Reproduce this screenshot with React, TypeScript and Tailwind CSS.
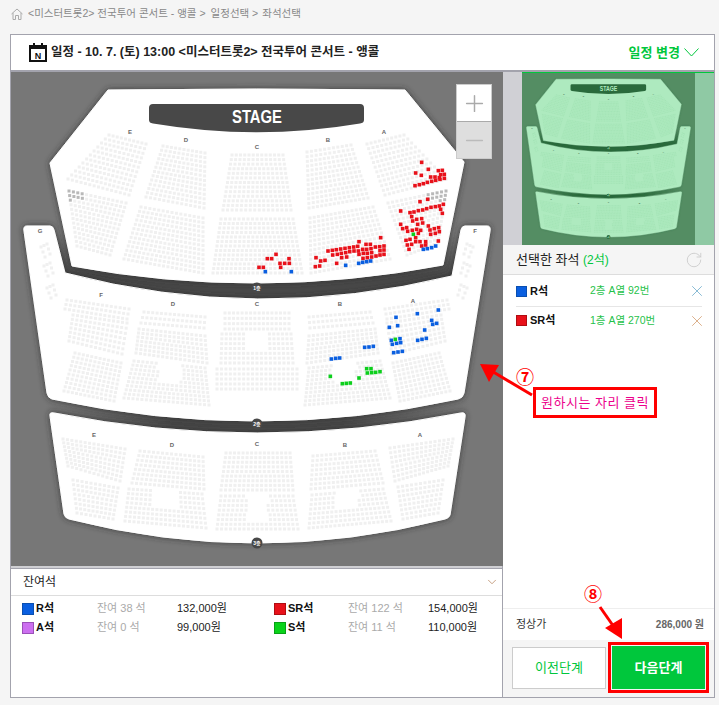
import { Minus, Plus, RotateCw, X, ChevronDown } from "lucide-react";

type Pt = [number, number];
type Block = { c: [Pt, Pt, Pt, Pt]; rows: number; hole?: [number, number, number, number] };

const block = (tl: Pt, tr: Pt, br: Pt, bl: Pt, rows: number, hole?: [number, number, number, number]): Block => ({
  c: [tl, tr, br, bl],
  rows,
  hole,
});

const blocks: Block[] = [
  // 1층
  block([109, 134], [146, 143], [129, 194], [68, 178], 12),
  block([69, 190], [126, 202], [110, 254], [77, 245], 13),
  block([163, 145], [205, 152], [204, 207], [146, 196], 13),
  block([141, 206], [203, 217], [203, 272], [124, 258], 13),
  block([232, 154], [283, 154], [291, 209], [223, 209], 13),
  block([221, 218], [293, 218], [302, 272], [213, 272], 13),
  block([307, 151], [351, 144], [368, 197], [309, 207], 13),
  block([310, 217], [373, 206], [390, 258], [311, 272], 13),
  block([367, 143], [404, 134], [446, 178], [385, 194], 12),
  block([388, 202], [446, 190], [438, 242], [407, 254], 13),
  // 2층
  block([385, 308], [447, 299], [449, 308], [387, 318], 3),
  block([387, 322], [441, 314], [445, 340], [392, 353], 7),
  block([393, 362], [439, 352], [450, 390], [400, 400], 10),
  block([309, 316], [370, 311], [373, 322], [310, 327], 3),
  block([309, 335], [375, 328], [378, 352], [307, 362], 7),
  block([309, 367], [380, 360], [390, 397], [305, 404], 10, [334, 362, 356, 381]),
  block([225, 312], [289, 312], [289, 328], [225, 328], 4),
  block([222, 333], [291, 333], [293, 362], [221, 362], 7, [246, 331, 268, 349]),
  block([217, 368], [297, 368], [297, 388], [217, 388], 5),
  block([129, 308], [67, 299], [65, 308], [127, 318], 3),
  block([127, 322], [73, 314], [69, 340], [122, 353], 7),
  block([121, 362], [75, 352], [64, 390], [114, 400], 10),
  block([205, 316], [144, 311], [141, 322], [204, 327], 3),
  block([205, 335], [139, 328], [136, 352], [207, 362], 7),
  block([205, 367], [134, 360], [124, 397], [209, 404], 10, [158, 362, 180, 381]),
  // 2층 옆
  block([41, 246], [47, 243], [50, 253], [45, 256], 3),
  block([44, 265], [50, 262], [53, 272], [48, 275], 3),
  block([47, 287], [53, 284], [56, 294], [51, 297], 3),
  block([467, 243], [473, 246], [469, 256], [464, 253], 3),
  block([464, 262], [470, 265], [466, 275], [461, 272], 3),
  block([461, 284], [467, 287], [463, 297], [458, 294], 3),
  // 3층
  block([63, 438], [125, 448], [120, 480], [68, 465], 8),
  block([73, 479], [118, 487], [113, 518], [77, 512], 8),
  block([140, 450], [203, 456], [204, 488], [132, 482], 8),
  block([129, 488], [202, 493], [206, 527], [125, 520], 8, [153, 486, 177, 507]),
  block([226, 452], [290, 452], [293, 489], [221, 489], 9),
  block([221, 495], [293, 495], [298, 528], [217, 528], 8, [247, 494, 268, 520]),
  block([313, 455], [375, 450], [383, 482], [311, 488], 8),
  block([312, 494], [383, 488], [391, 520], [309, 527], 8, [337, 486, 359, 507]),
  block([390, 447], [453, 438], [448, 465], [395, 480], 8),
  block([398, 486], [443, 479], [438, 512], [403, 518], 8),
];

const lerp = (a: Pt, b: Pt, t: number): Pt => [a[0] + (b[0] - a[0]) * t, a[1] + (b[1] - a[1]) * t];

const seats: Pt[] = [];
blocks.forEach(({ c, rows, hole }) => {
  for (let r = 0; r < rows; r++) {
    const t = r / (rows - 1);
    const left = lerp(c[0], c[3], t);
    const right = lerp(c[1], c[2], t);
    const n = Math.round(Math.hypot(right[0] - left[0], right[1] - left[1]) / 4.4);
    for (let i = 0; i <= n; i++) {
      const p = lerp(left, right, i / n);
      if (hole && p[0] > hole[0] && p[0] < hole[2] && p[1] > hole[1] && p[1] < hole[3]) continue;
      seats.push(p);
    }
  }
});

// 확대 화면에서 읽은 좌표
const z7 = (l: number[][]): Pt[] => l.map(([x, y]) => [250 + x / 3, 75 + y / 3]);
const z8 = (l: number[][]): Pt[] => l.map(([x, y]) => [250 + x / 3, 280 + y / 3]);

const redSeats = z7([
  [515, 259], [535, 280], [497, 291], [514, 298], [565, 284], [577, 283], [572, 296], [583, 295], [542, 303], [555, 303],
  [568, 305], [583, 307], [557, 313], [570, 310], [545, 316], [532, 319], [520, 323], [508, 326], [495, 329],
  [510, 377], [533, 370], [452, 405], [480, 410], [492, 408], [505, 404], [518, 402], [530, 398], [543, 394], [556, 392],
  [568, 390], [580, 385], [572, 400], [577, 412], [485, 422], [500, 430], [515, 428], [488, 435], [503, 445], [518, 441],
  [452, 445], [458, 458], [470, 455], [535, 450], [540, 462], [553, 458], [566, 455], [473, 466], [487, 463], [500, 460],
  [512, 463], [542, 475], [556, 472], [568, 467], [505, 472], [468, 493], [480, 490], [497, 485], [472, 507], [485, 505],
  [497, 497], [510, 497], [527, 497], [565, 495], [515, 510], [527, 507], [477, 520],
  [392, 485], [327, 497], [348, 505], [361, 505], [234, 525], [247, 523], [259, 521], [272, 519], [285, 517], [298, 515],
  [311, 513], [323, 511], [338, 520], [350, 520], [363, 518], [376, 513], [389, 512], [402, 510], [248, 537], [262, 535],
  [274, 532], [287, 530], [299, 527], [312, 525], [325, 525], [340, 532], [352, 532], [365, 530], [390, 524], [402, 522],
  [198, 545], [275, 545], [290, 543], [327, 535], [339, 547], [352, 545], [365, 543], [378, 540], [390, 537], [402, 535],
  [212, 555], [225, 553], [196, 572], [209, 570], [260, 562],
  [78, 535], [52, 548], [65, 548], [117, 548], [90, 562], [104, 562], [118, 562], [27, 574], [40, 574], [92, 574],
]);

const blueSeats = [
  ...z7([
    [520, 520], [532, 518], [545, 515], [557, 510], [287, 568], [326, 562], [338, 559], [350, 557], [362, 555], [46, 587], [124, 587],
  ]),
  ...z8([
    [438, 109], [502, 98], [565, 87], [545, 118], [548, 130], [560, 127], [418, 139], [443, 134], [524, 147], [424, 178],
    [450, 173], [503, 178], [516, 175], [529, 172], [427, 190], [440, 187], [452, 185], [431, 215], [444, 213], [457, 211],
    [344, 199], [357, 198], [370, 196], [244, 234], [257, 232], [269, 231],
  ]),
];

const greenSeats = [
  ...z7([[490, 475]]),
  ...z8([
    [436, 175], [350, 263], [363, 263], [352, 276], [365, 275], [377, 274], [390, 272], [241, 286], [327, 291], [277, 308], [289, 307], [301, 306],
  ]),
];

const labels: [string, number, number][] = [
  ["E", 130, 133], ["D", 186, 141], ["C", 257, 148], ["B", 328, 141], ["A", 384, 133],
  ["G", 40, 232], ["F", 475, 232], ["F", 101, 296], ["D", 173, 305], ["C", 257, 305], ["B", 340, 305], ["A", 413, 302],
  ["E", 94, 436], ["D", 172, 446], ["C", 257, 445], ["B", 345, 446], ["A", 420, 436],
];

const badges: [string, number][] = [["1층", 287], ["2층", 423], ["3층", 542]];

const floorTop = "M108 89 Q257 87 405 89 L464 161 L443 264 Q257 299.5 72 265 L50 162 Z";
const floorMid =
  "M27 225 L50 225 Q53 225 54 229 L65 272 Q257 322.5 452 275 L461 229 Q462 225 465 225 L487 225 Q491 225 490 230 L464 392 Q463 397 458 398 Q257 442 52 398 Q48 397 47 392 L24 230 Q23 225 27 225 Z";
const floorLow =
  "M50 415 Q49 411 54 412 Q257 452 461 412 Q466 411 465 416 L450 514 Q449 517 445 518 Q257 566 69 518 Q65 517 64 513 Z";

type Palette = {
  id: string;
  bg: string;
  floor: string;
  seat: string;
  held: string;
  dark: string;
  label: string;
  stageText: string;
  shadow: string;
  shadowOpacity: string;
  colored: boolean;
};

function SeatMap({ p, className }: { p: Palette; className: string }) {
  return (
    <svg viewBox="11 71 492 494" className={className} preserveAspectRatio="none">
      <defs>
        <filter id={`${p.id}-sh`} x="-10%" y="-10%" width="120%" height="120%">
          <feDropShadow dx="0" dy="0" stdDeviation="3" floodColor={p.shadow} floodOpacity={p.shadowOpacity} />
        </filter>
        <linearGradient id={`${p.id}-b1`} gradientUnits="userSpaceOnUse" x1="0" y1="232" x2="0" y2="274">
          <stop offset="0" stopColor={p.bg} />
          <stop offset="1" stopColor={p.dark} />
        </linearGradient>
        <linearGradient id={`${p.id}-b2`} gradientUnits="userSpaceOnUse" x1="45" y1="0" x2="470" y2="0">
          <stop offset="0" stopColor={p.bg} />
          <stop offset="0.3" stopColor={p.dark} />
          <stop offset="0.7" stopColor={p.dark} />
          <stop offset="1" stopColor={p.bg} />
        </linearGradient>
      </defs>
      <rect x="11" y="71" width="492" height="494" fill={p.bg} />
      <path d="M58 228 L68 268 Q257 311 450 272 L459 228" fill="none" stroke={`url(#${p.id}-b1)`} strokeWidth="18" />
      <path d="M45 402 Q257 450 470 402" fill="none" stroke={`url(#${p.id}-b2)`} strokeWidth="15" />
      {[floorTop, floorMid, floorLow].map((d) => (
        <path key={d} d={d} fill={p.floor} stroke={p.floor} strokeLinejoin="round" filter={`url(#${p.id}-sh)`} />
      ))}
      <path d="M149 107 Q149 103 153 103 L360 103 Q364 103 364 107 L364 119 Q364 122 360 122.5 Q257 140 153 122.5 Q149 122 149 119 Z" fill={p.dark} />
      <text x="257" y="122" textAnchor="middle" fontSize="19" fontWeight="700" fill={p.stageText} textLength="50" lengthAdjust="spacingAndGlyphs">
        STAGE
      </text>
      {seats.map(([x, y], i) => (
        <rect
          key={i}
          x={x - 1.5}
          y={y - 1.5}
          width="3"
          height="3"
          fill={p.colored && y > 187 && y < 200 && (x < 85 || x > 428) ? p.held : p.seat}
        />
      ))}
      {p.colored &&
        ([
          [redSeats, "#e8111a"],
          [blueSeats, "#0a5fe0"],
          [greenSeats, "#0ccf1c"],
        ] as [Pt[], string][]).map(([list, color]) =>
          list.map(([x, y], i) => <rect key={color + i} x={x - 1.8} y={y - 1.8} width="3.6" height="3.6" fill={color} />)
        )}
      {labels.map(([t, x, y], i) => (
        <text key={i} x={x} y={y} textAnchor="middle" fontSize="6" fontWeight="700" fill={p.label}>
          {t}
        </text>
      ))}
      {badges.map(([t, y]) => (
        <g key={t}>
          <circle cx="257" cy={y} r="5.5" fill={p.dark} />
          <text x="257" y={y + 1.8} textAnchor="middle" fontSize="5" fontWeight="700" fill={p.stageText}>
            {t}
          </text>
        </g>
      ))}
    </svg>
  );
}

const mainPalette: Palette = {
  id: "main",
  bg: "#777777",
  floor: "#ffffff",
  seat: "#f0f0f0",
  held: "#b9b9b9",
  dark: "#484848",
  label: "#666666",
  stageText: "#ffffff",
  shadow: "#2a2a2a",
  shadowOpacity: "0.8",
  colored: true,
};

const miniPalette: Palette = {
  id: "mini",
  bg: "#548d63",
  floor: "#aeeabf",
  seat: "#a4e4b6",
  held: "#a4e4b6",
  dark: "#2a6a3c",
  label: "#4a7a58",
  stageText: "#aeeabf",
  shadow: "#1f5a30",
  shadowOpacity: "0.35",
  colored: false,
};

function Remain({ swatch, name, left, price, nameW, leftW }: { swatch: string; name: string; left: string; price: string; nameW: string; leftW: string }) {
  return (
    <div className="flex items-center text-[11px] h-[19px]">
      <span className={`w-[12px] h-[12px] border ${swatch}`} />
      <span className={`ml-[2px] font-bold text-[#111] ${nameW}`}>{name}</span>
      <span className={`text-[#aaa] ${leftW}`}>{left}</span>
      <span className="text-[#222]">{price}</span>
    </div>
  );
}

export default function App() {
  return (
    <div className="relative w-[719px] h-[705px] overflow-hidden bg-[#f5f5f5] [font-family:'Liberation_Sans','Noto_Sans_CJK_KR',sans-serif]">
      <div className="h-[34px] flex items-center pl-[11px] pb-[6px] text-[10.5px] text-[#888]">
        <svg width="12" height="12" viewBox="0 0 12 12" fill="none" stroke="#aaa" strokeWidth="1">
          <path d="M0.5 6 L6 1 L11.5 6 M2 5 V11.5 H4.5 V7.5 H7.5 V11.5 H10 V5" />
        </svg>
        <span className="ml-[5px]">{"<미스터트롯2> 전국투어 콘서트 - 앵콜 >"}</span>
        <span className="ml-[5px]">{"일정선택 >"}</span>
        <span className="ml-[4px]">좌석선택</span>
      </div>

      <div className="ml-[10px] w-[705px] h-[664px] border border-[#a3a3ad] bg-white flex flex-col">
        <div className="h-[37px] shrink-0 flex items-center border-b-2 border-[#a3a3ad] pl-[18px] pr-[15px]">
          <svg width="18" height="19" viewBox="0 0 18 19" className="shrink-0">
            <rect x="1" y="3" width="16" height="15" fill="#fff" stroke="#111" strokeWidth="2" />
            <rect x="1" y="2" width="16" height="4" fill="#111" />
            <rect x="4" y="0" width="2" height="4" fill="#111" />
            <rect x="12" y="0" width="2" height="4" fill="#111" />
            <text x="9" y="15.5" textAnchor="middle" fontSize="9" fontWeight="700" fill="#111">N</text>
          </svg>
          <span className="ml-[4px] text-[12.5px] font-bold text-[#222]">{"일정 - 10. 7. (토) 13:00 <미스터트롯2> 전국투어 콘서트 - 앵콜"}</span>
          <span className="ml-auto text-[13px] font-bold text-[#00c73c]">일정 변경</span>
          <svg width="15" height="9" viewBox="0 0 15 9" fill="none" stroke="#00c73c" strokeWidth="1" className="ml-[4px]">
            <path d="M0.5 0.5 L7.5 8 L14.5 0.5" />
          </svg>
        </div>

        <div className="flex flex-1 min-h-0">
          <div className="w-[492px] shrink-0 flex flex-col border-r border-[#a3a3ad]">
            <div className="relative h-[494px] shrink-0">
              <SeatMap p={mainPalette} className="block w-[492px] h-[494px]" />
              <div className="absolute left-[445px] top-[12px] w-[36px] flex flex-col border border-[#ccc]">
                <div className="h-[37px] bg-white flex items-center justify-center border-b border-[#aaa]">
                  <Plus size={27} strokeWidth={1.3} className="text-[#aaa]" />
                </div>
                <div className="h-[36px] bg-[#dedede] flex items-center justify-center">
                  <Minus size={27} strokeWidth={1.3} className="text-[#bbb]" />
                </div>
              </div>
            </div>
            <div className="h-[3px] shrink-0 bg-[#cfcfd3] border-b border-[#a3a3ad]" />
            <div className="h-[27px] shrink-0 flex items-center justify-between pl-[12px] pr-[3px] border-b border-[#ddd]">
              <span className="text-[12px] text-[#222]">잔여석</span>
              <ChevronDown size={14} strokeWidth={1.2} className="text-[#b07a50]" />
            </div>
            <div className="grid grid-cols-[252px_1fr] pl-[11px] pt-[3px]">
              <Remain swatch="bg-[#0a5fe0] border-[#0a4fb0]" name="R석" left="잔여 38 석" price="132,000원" nameW="w-[61px]" leftW="w-[80px]" />
              <Remain swatch="bg-[#e8111a] border-[#b00d12]" name="SR석" left="잔여 122 석" price="154,000원" nameW="w-[60px]" leftW="w-[80px]" />
              <Remain swatch="bg-[#cc6ff0] border-[#9a50b8]" name="A석" left="잔여 0 석" price="99,000원" nameW="w-[61px]" leftW="w-[80px]" />
              <Remain swatch="bg-[#0ad31a] border-[#08a015]" name="S석" left="잔여 11 석" price="110,000원" nameW="w-[60px]" leftW="w-[80px]" />
            </div>
          </div>

          <div className="flex-1 flex flex-col min-w-0">
            <div className="h-[173px] shrink-0 flex border-t border-[#00c73c] bg-[#d0d0d5]">
              <div className="w-[19px] -mt-px h-[173px] bg-[#d0d0d5]" />
              <SeatMap p={miniPalette} className="block w-[173px] h-[172px]" />
              <div className="flex-1 bg-[#8fc9a4]" />
            </div>
            <div className="h-[30px] shrink-0 flex items-center justify-between bg-[#f5f5f5] border-b border-[#ddd] pl-[13px] pr-[11px]">
              <span className="text-[13px] text-[#222]">
                선택한 좌석 <span className="text-[#00c73c] text-[12px]">(2석)</span>
              </span>
              <RotateCw size={18} strokeWidth={1.2} className="text-[#ccc]" />
            </div>
            <div className="flex-1 pl-[13px] pr-[12px] pt-[1px]">
              <div className="h-[31px] flex items-center border-b border-[#e6e6e6] text-[11px]">
                <span className="w-[11px] h-[11px] bg-[#0a5fe0] border border-[#0a4fb0]" />
                <span className="ml-[3px] w-[60px] font-bold text-[#111]">R석</span>
                <span className="text-[10.5px] text-[#1fc24a]">2층 A열 92번</span>
                <X size={18} strokeWidth={1.2} className="ml-auto -mr-[4px] text-[#7db4d0]" />
              </div>
              <div className="h-[27px] flex items-center text-[11px]">
                <span className="w-[11px] h-[11px] bg-[#e8111a] border border-[#b00d12]" />
                <span className="ml-[3px] w-[60px] font-bold text-[#111]">SR석</span>
                <span className="text-[10.5px] text-[#1fc24a]">1층 A열 270번</span>
                <X size={18} strokeWidth={1.2} className="ml-auto -mr-[4px] text-[#d8a880]" />
              </div>
            </div>
            <div className="h-[32px] shrink-0 flex items-center justify-between border-t border-[#eee] pl-[13px] pr-[10px] bg-white">
              <span className="text-[11px] text-[#333]">정상가</span>
              <span className="text-[10px] font-bold text-[#666]">286,000 원</span>
            </div>
            <div className="h-[57px] shrink-0 flex items-start bg-[#f5f5f5] pl-[9px] pt-[2px] gap-[2px]">
              <button className="mt-[5px] w-[94px] h-[42px] bg-white border border-[#ccc] text-[13px] text-[#00c73c]">이전단계</button>
              <div className="w-[101px] h-[51px] border-[3px] border-[#f00] p-px">
                <button className="w-full h-full bg-[#00c73c] text-[13px] font-bold text-white">다음단계</button>
              </div>
            </div>
          </div>
        </div>
      </div>

      {/* 안내 표시 */}
      <svg className="absolute left-0 top-0 w-[719px] h-[705px] pointer-events-none" viewBox="0 0 719 705">
        <line x1="532" y1="395" x2="490" y2="370" stroke="#f00" strokeWidth="3" />
        <polygon points="480,364 499,365 489,382" fill="#f00" />
        <line x1="600" y1="607" x2="614" y2="627" stroke="#f00" strokeWidth="3" />
        <polygon points="622,639 605,628 622,618" fill="#f00" />
      </svg>
      <span className="absolute left-[516px] top-[367px] text-[18px] leading-[22px] font-bold text-[#f00]">⑦</span>
      <span className="absolute left-[584px] top-[584px] text-[18px] leading-[22px] font-bold text-[#f00]">⑧</span>
      <div className="absolute left-[533px] top-[387px] w-[124px] h-[31px] border-[3px] border-[#f00] bg-white flex items-center justify-center text-[13px] tracking-[0.5px] text-[#ec008c]">
        원하시는 자리 클릭
      </div>
    </div>
  );
}
